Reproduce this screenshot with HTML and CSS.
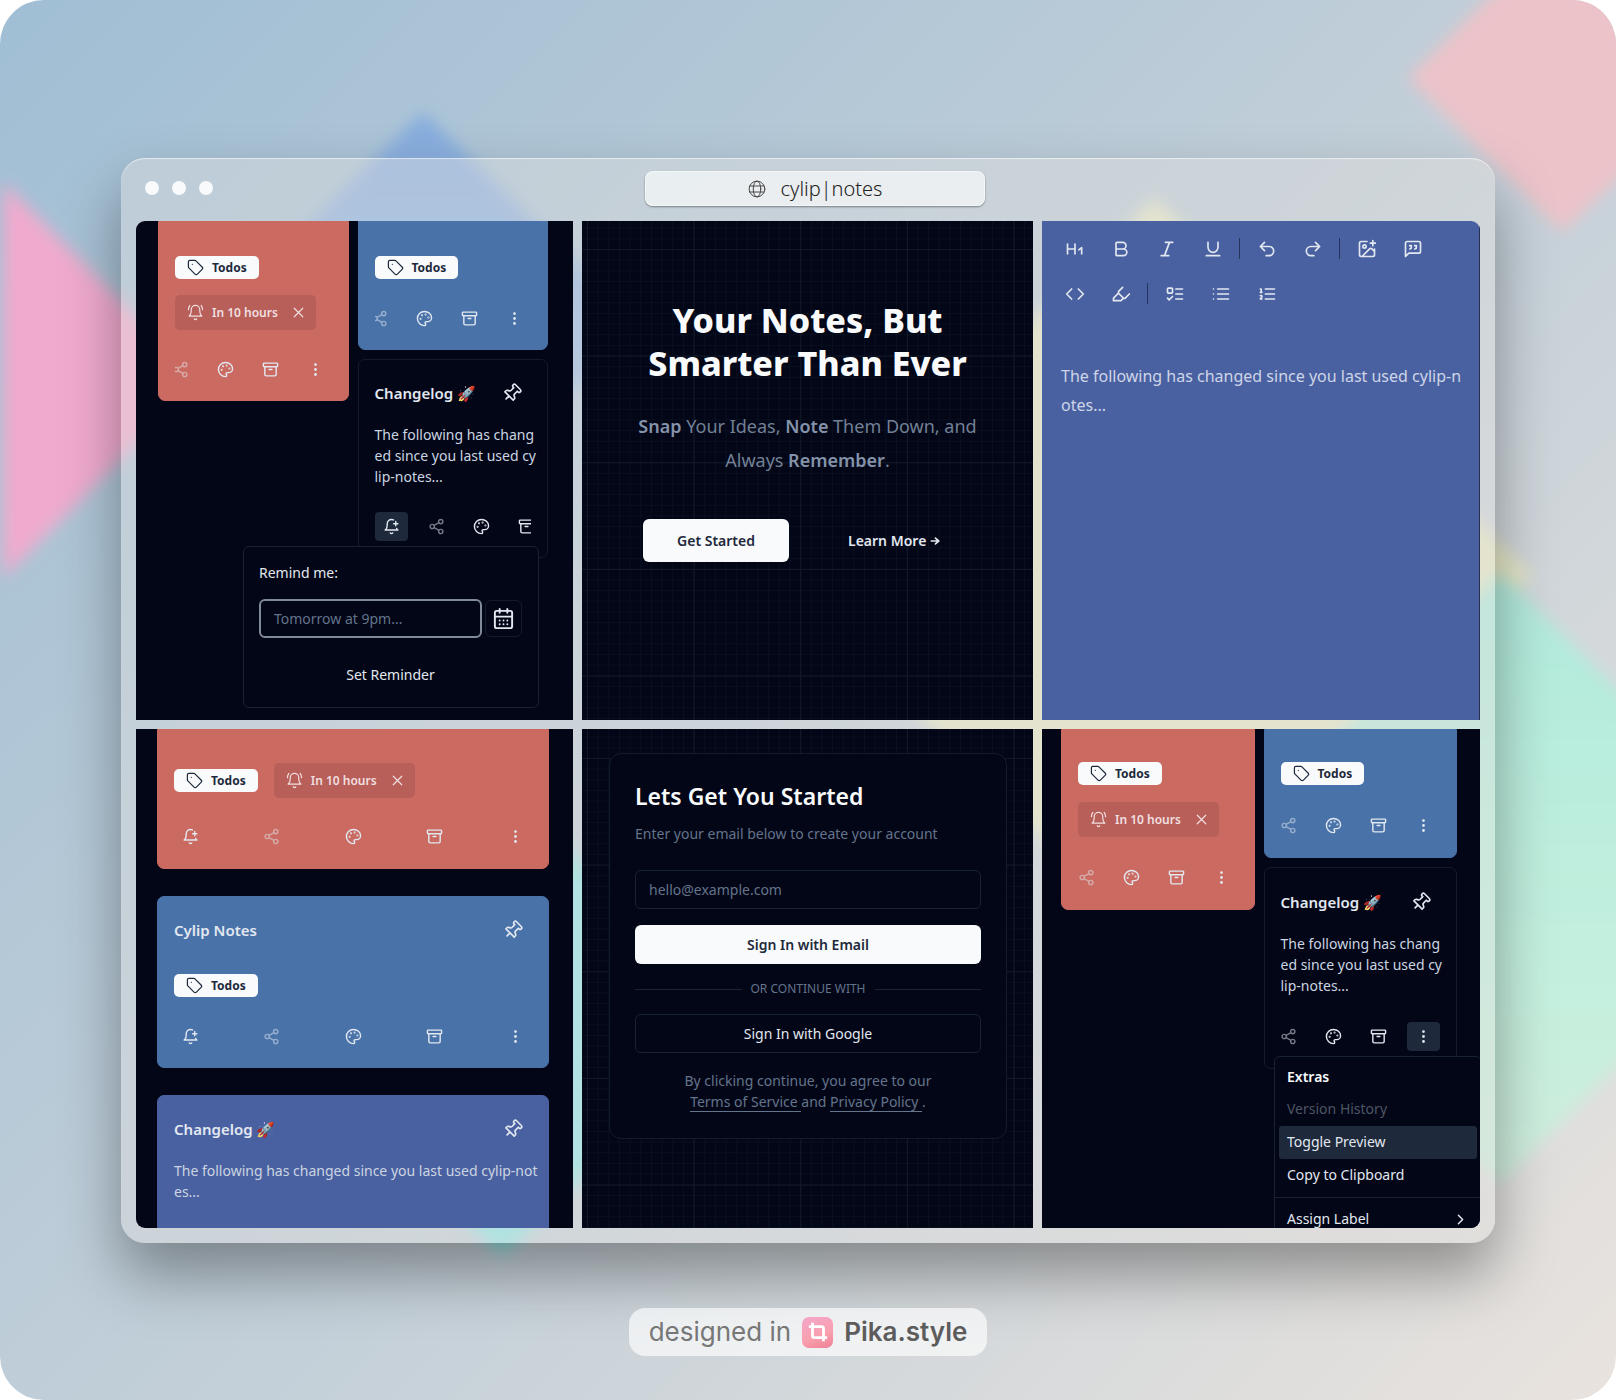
FILE: index.html
```html
<!DOCTYPE html>
<html lang="en">
<head>
<meta charset="utf-8">
<meta name="viewport" content="width=device-width, initial-scale=1">
<title>cylip|notes</title>
<link rel="stylesheet" href="styles.css">
</head>
<body>
<svg class="sprite" aria-hidden="true">
  <symbol id="share" viewBox="0 0 24 24"><circle cx="18" cy="5" r="3"/><circle cx="6" cy="12" r="3"/><circle cx="18" cy="19" r="3"/><path d="M8.6 13.5l6.8 4M15.4 6.5l-6.8 4"/></symbol>
  <symbol id="palette" viewBox="0 0 24 24"><circle cx="13.5" cy="6.5" r=".5"/><circle cx="17.5" cy="10.5" r=".5"/><circle cx="8.5" cy="7.5" r=".5"/><circle cx="6.5" cy="12.5" r=".5"/><path d="M12 2C6.5 2 2 6.5 2 12s4.5 10 10 10c.926 0 1.648-.746 1.648-1.688 0-.437-.18-.835-.437-1.125-.29-.289-.438-.652-.438-1.125a1.64 1.64 0 0 1 1.668-1.668h1.996c3.051 0 5.555-2.503 5.555-5.554C21.965 6.012 17.461 2 12 2z"/></symbol>
  <symbol id="archive" viewBox="0 0 24 24"><rect x="2" y="3" width="20" height="5" rx="1"/><path d="M4 8v11a2 2 0 0 0 2 2h12a2 2 0 0 0 2-2V8M10 12h4"/></symbol>
  <symbol id="dots" viewBox="0 0 24 24"><circle cx="12" cy="12" r="1"/><circle cx="12" cy="5" r="1"/><circle cx="12" cy="19" r="1"/></symbol>
  <symbol id="bell-plus" viewBox="0 0 24 24"><path d="M19.3 14.8C20.1 16.4 21 17 21 17H3s3-2 3-9c0-3.3 2.7-6 6-6 1 0 1.9.2 2.8.7M10.3 21a1.94 1.94 0 0 0 3.4 0M15 8h6M18 5v6"/></symbol>
  <symbol id="bell-ring" viewBox="0 0 24 24"><path d="M6 8a6 6 0 0 1 12 0c0 7 3 9 3 9H3s3-2 3-9M10.3 21a1.94 1.94 0 0 0 3.4 0M4 2C2.8 3.7 2 5.7 2 8M22 8c0-2.3-.8-4.3-2-6"/></symbol>
  <symbol id="pin" viewBox="0 0 24 24"><path transform="rotate(45 12 12)" d="M12 17v5M5 17h14v-1.76a2 2 0 0 0-1.11-1.79l-1.78-.9A2 2 0 0 1 15 10.76V6h1a2 2 0 0 0 0-4H8a2 2 0 0 0 0 4h1v4.76a2 2 0 0 1-1.11 1.79l-1.78.9A2 2 0 0 0 5 15.24Z"/></symbol>
  <symbol id="tag" viewBox="0 0 24 24"><path d="M12.586 2.586A2 2 0 0 0 11.172 2H4a2 2 0 0 0-2 2v7.172a2 2 0 0 0 .586 1.414l8.704 8.704a2.426 2.426 0 0 0 3.42 0l6.58-6.58a2.426 2.426 0 0 0 0-3.42zM7.500 7.500h.01"/></symbol>
  <symbol id="x" viewBox="0 0 24 24"><path d="M18 6 6 18M6 6l12 12"/></symbol>
  <symbol id="calendar" viewBox="0 0 24 24"><rect x="3" y="4" width="18" height="18" rx="2"/><path d="M16 2v4M8 2v4M3 10h18M8 14h.01M12 14h.01M16 14h.01M8 18h.01M12 18h.01M16 18h.01"/></symbol>
  <symbol id="h1" viewBox="0 0 24 24"><path d="M3 18V6M12 18V6M3 12h9M16.500 13l3.500-2.500V18"/></symbol>
  <symbol id="bold" viewBox="0 0 24 24"><path d="M6 12h9a4 4 0 0 1 0 8H7a1 1 0 0 1-1-1V5a1 1 0 0 1 1-1h7a4 4 0 0 1 0 8"/></symbol>
  <symbol id="italic" viewBox="0 0 24 24"><path d="M19 4h-9M14 20H5M15 4 9 20"/></symbol>
  <symbol id="underline" viewBox="0 0 24 24"><path d="M6 4v6a6 6 0 0 0 12 0V4M4 20h16"/></symbol>
  <symbol id="undo" viewBox="0 0 24 24"><path d="M9 14 4 9l5-5M4 9h10.500a5.500 5.500 0 0 1 0 11H11"/></symbol>
  <symbol id="redo" viewBox="0 0 24 24"><path d="m15 14 5-5-5-5M20 9H9.500a5.500 5.500 0 0 0 0 11H13"/></symbol>
  <symbol id="image" viewBox="0 0 24 24"><path d="M21 12v7a2 2 0 0 1-2 2H5a2 2 0 0 1-2-2V5a2 2 0 0 1 2-2h7M16 5h6M19 2v6M21 15l-3.100-3.100a2 2 0 0 0-2.800 0L6 21"/><circle cx="9" cy="9" r="2"/></symbol>
  <symbol id="quote" viewBox="0 0 24 24"><path d="M21 15a2 2 0 0 1-2 2H7l-4 4V5a2 2 0 0 1 2-2h14a2 2 0 0 1 2 2zM8 12a2 2 0 0 0 2-2V8H8M14 12a2 2 0 0 0 2-2V8h-2"/></symbol>
  <symbol id="code" viewBox="0 0 24 24"><path d="m16 18 6-6-6-6M8 6l-6 6 6 6"/></symbol>
  <symbol id="highlight" viewBox="0 0 24 24"><path d="m9 11-6 6v3h9l3-3M22 12l-4.600 4.600a2 2 0 0 1-2.800 0l-5.200-5.200a2 2 0 0 1 0-2.800L14 4"/></symbol>
  <symbol id="todo" viewBox="0 0 24 24"><rect x="3" y="5" width="6" height="6" rx="1"/><path d="m3 17 2 2 4-4M13 6h8M13 12h8M13 18h8"/></symbol>
  <symbol id="list" viewBox="0 0 24 24"><path d="M8 6h13M8 12h13M8 18h13M3 6h.01M3 12h.01M3 18h.01"/></symbol>
  <symbol id="ordered" viewBox="0 0 24 24"><path d="M10 6h11M10 12h11M10 18h11M4 6h1v4M4 10h2M6 18H4c0-1 2-2 2-3s-1-1.500-2-1"/></symbol>
  <symbol id="chevron" viewBox="0 0 24 24"><path d="m9 18 6-6-6-6"/></symbol>
  <symbol id="arrow" viewBox="0 0 24 24"><path d="M3 12h18M13 5l8 7-8 7"/></symbol>
  <symbol id="globe" viewBox="0 0 24 24"><circle cx="12" cy="12" r="10.500"/><ellipse cx="12" cy="12" rx="5" ry="10.500"/><path d="M2.500 8h19M2.500 16h19"/></symbol>
  <symbol id="crop" viewBox="0 0 24 24"><path d="M6 2v14a2 2 0 0 0 2 2h14M18 22V8a2 2 0 0 0-2-2H2"/></symbol>
</svg>

<main class="stage">
  <svg class="backdrop" viewBox="0 0 1616 1400" preserveAspectRatio="none" aria-hidden="true">
    <defs>
      <filter id="soft" x="-20%" y="-20%" width="140%" height="140%"><feGaussianBlur stdDeviation="8"/></filter>
      <linearGradient id="green" x1="0" y1="0" x2="0" y2="1"><stop offset="0" stop-color="#b0eadc"/><stop offset=".6" stop-color="#c2efde"/><stop offset="1" stop-color="#cfeedd"/></linearGradient>
      <linearGradient id="sky" x1="0" y1="0" x2="0" y2="1"><stop offset="0" stop-color="#85acde"/><stop offset="1" stop-color="#a8c2e2"/></linearGradient>
    </defs>
    <g filter="url(#soft)">
      <path fill="#f0aace" d="M3 182 200 380 3 578z"/>
      <path fill="url(#sky)" d="M423 112 640 325 423 542 206 325z"/>
      <path fill="#ecc3c9" d="M1408 78 1500-14H1640V158L1562 232z"/>
      <path fill="#e6e7c4" d="M1155 198 1532 575 1155 952 778 575z"/>
      <path fill="#8fe6e4" d="M502 785 740 1023 502 1256 264 1023z"/>
      <path fill="url(#green)" d="M1500 572 1806 878 1500 1184 1194 878z"/>
    </g>
  </svg>

  <section class="window">
    <header class="titlebar">
      <div class="lights"><i></i><i></i><i></i></div>
      <div class="address"><svg class="icon icon-globe"><use href="#globe"/></svg><span>cylip|notes</span></div>
    </header>

    <div class="tiles">
      <!-- Masonry with reminder popover -->
      <article class="tile deck deck-a">
        <div class="column">
          <div class="card red untitled">
            <div class="chips">
              <span class="badge"><svg class="icon"><use href="#tag"/></svg>Todos</span>
              <span class="due"><svg class="icon"><use href="#bell-ring"/></svg>In 10 hours<button class="bare" aria-label="Remove reminder"><svg class="icon"><use href="#x"/></svg></button></span>
            </div>
            <div class="actions">
              <button disabled aria-label="Share"><svg class="icon"><use href="#share"/></svg></button>
              <button aria-label="Colour"><svg class="icon"><use href="#palette"/></svg></button>
              <button aria-label="Archive"><svg class="icon"><use href="#archive"/></svg></button>
              <button aria-label="More"><svg class="icon"><use href="#dots"/></svg></button>
            </div>
          </div>
        </div>
        <div class="column">
          <div class="card blue">
            <h3 class="card-title">Cylip Notes</h3>
            <div class="chips"><span class="badge"><svg class="icon"><use href="#tag"/></svg>Todos</span></div>
            <div class="actions">
              <button disabled aria-label="Share"><svg class="icon"><use href="#share"/></svg></button>
              <button aria-label="Colour"><svg class="icon"><use href="#palette"/></svg></button>
              <button aria-label="Archive"><svg class="icon"><use href="#archive"/></svg></button>
              <button aria-label="More"><svg class="icon"><use href="#dots"/></svg></button>
            </div>
          </div>
          <div class="card">
            <div class="card-head"><h3 class="card-title">Changelog 🚀</h3><button class="bare" aria-label="Pin"><svg class="icon icon-pin"><use href="#pin"/></svg></button></div>
            <p class="card-text">The following has chang<br>ed since you last used cy<br>lip-notes...</p>
            <div class="actions from-start">
              <button class="active" aria-label="Remind"><svg class="icon"><use href="#bell-plus"/></svg></button>
              <button disabled aria-label="Share"><svg class="icon"><use href="#share"/></svg></button>
              <button aria-label="Colour"><svg class="icon"><use href="#palette"/></svg></button>
              <button aria-label="Archive"><svg class="icon"><use href="#archive"/></svg></button>
            </div>
          </div>
        </div>
        <form class="reminder">
          <label for="when">Remind me:</label>
          <div class="reminder-row">
            <input id="when" class="field focused" type="text" placeholder="Tomorrow at 9pm...">
            <button type="button" class="calendar" aria-label="Pick a date"><svg class="icon"><use href="#calendar"/></svg></button>
          </div>
          <button type="button" class="ghost">Set Reminder</button>
        </form>
      </article>

      <!-- Landing hero -->
      <article class="tile ruled hero">
        <h1>Your Notes, But<br>Smarter Than Ever</h1>
        <p><strong>Snap</strong> Your Ideas, <strong>Note</strong> Them Down, and<br>Always <strong>Remember</strong>.</p>
        <div class="hero-actions">
          <button class="solid">Get Started</button>
          <a href="#more">Learn More <svg class="icon icon-arrow" aria-hidden="true"><use href="#arrow"/></svg></a>
        </div>
      </article>

      <!-- Editor -->
      <article class="tile editor">
        <div class="toolbar">
          <button aria-label="Heading"><svg class="icon"><use href="#h1"/></svg></button>
          <button aria-label="Bold"><svg class="icon"><use href="#bold"/></svg></button>
          <button aria-label="Italic"><svg class="icon"><use href="#italic"/></svg></button>
          <button aria-label="Underline"><svg class="icon"><use href="#underline"/></svg></button>
          <i class="rule"></i>
          <button aria-label="Undo"><svg class="icon"><use href="#undo"/></svg></button>
          <button aria-label="Redo"><svg class="icon"><use href="#redo"/></svg></button>
          <i class="rule"></i>
          <button aria-label="Image"><svg class="icon"><use href="#image"/></svg></button>
          <button aria-label="Quote"><svg class="icon"><use href="#quote"/></svg></button>
          <button aria-label="Code"><svg class="icon"><use href="#code"/></svg></button>
          <button aria-label="Highlight"><svg class="icon"><use href="#highlight"/></svg></button>
          <i class="rule"></i>
          <button aria-label="Task list"><svg class="icon"><use href="#todo"/></svg></button>
          <button aria-label="Bullet list"><svg class="icon"><use href="#list"/></svg></button>
          <button aria-label="Numbered list"><svg class="icon"><use href="#ordered"/></svg></button>
        </div>
        <p>The following has changed since you last used cylip-n<br>otes...</p>
      </article>

      <!-- Single column list -->
      <article class="tile feed">
        <div class="card red untitled">
          <div class="chips">
            <span class="badge"><svg class="icon"><use href="#tag"/></svg>Todos</span>
            <span class="due"><svg class="icon"><use href="#bell-ring"/></svg>In 10 hours<button class="bare" aria-label="Remove reminder"><svg class="icon"><use href="#x"/></svg></button></span>
          </div>
          <div class="actions">
            <button aria-label="Remind"><svg class="icon"><use href="#bell-plus"/></svg></button>
            <button disabled aria-label="Share"><svg class="icon"><use href="#share"/></svg></button>
            <button aria-label="Colour"><svg class="icon"><use href="#palette"/></svg></button>
            <button aria-label="Archive"><svg class="icon"><use href="#archive"/></svg></button>
            <button aria-label="More"><svg class="icon"><use href="#dots"/></svg></button>
          </div>
        </div>
        <div class="card blue">
          <div class="card-head"><h3 class="card-title">Cylip Notes</h3><button class="bare" aria-label="Pin"><svg class="icon icon-pin"><use href="#pin"/></svg></button></div>
          <div class="chips"><span class="badge"><svg class="icon"><use href="#tag"/></svg>Todos</span></div>
          <div class="actions">
            <button aria-label="Remind"><svg class="icon"><use href="#bell-plus"/></svg></button>
            <button disabled aria-label="Share"><svg class="icon"><use href="#share"/></svg></button>
            <button aria-label="Colour"><svg class="icon"><use href="#palette"/></svg></button>
            <button aria-label="Archive"><svg class="icon"><use href="#archive"/></svg></button>
            <button aria-label="More"><svg class="icon"><use href="#dots"/></svg></button>
          </div>
        </div>
        <div class="card indigo">
          <div class="card-head"><h3 class="card-title">Changelog 🚀</h3><button class="bare" aria-label="Pin"><svg class="icon icon-pin"><use href="#pin"/></svg></button></div>
          <p class="card-text">The following has changed since you last used cylip-not<br>es...</p>
        </div>
      </article>

      <!-- Sign in -->
      <article class="tile ruled signin">
        <form class="panel">
          <h2>Lets Get You Started</h2>
          <label for="email">Enter your email below to create your account</label>
          <input id="email" class="field" type="email" placeholder="hello@example.com">
          <button type="button" class="solid">Sign In with Email</button>
          <div class="divider">OR CONTINUE WITH</div>
          <button type="button" class="outline">Sign In with Google</button>
          <p>By clicking continue, you agree to our<br><a href="#terms">Terms of Service&nbsp;</a>and <a href="#privacy">Privacy Policy&nbsp;</a>.</p>
        </form>
      </article>

      <!-- Masonry with extras menu -->
      <article class="tile deck deck-b">
        <div class="column">
          <div class="card red untitled">
            <div class="chips">
              <span class="badge"><svg class="icon"><use href="#tag"/></svg>Todos</span>
              <span class="due"><svg class="icon"><use href="#bell-ring"/></svg>In 10 hours<button class="bare" aria-label="Remove reminder"><svg class="icon"><use href="#x"/></svg></button></span>
            </div>
            <div class="actions">
              <button disabled aria-label="Share"><svg class="icon"><use href="#share"/></svg></button>
              <button aria-label="Colour"><svg class="icon"><use href="#palette"/></svg></button>
              <button aria-label="Archive"><svg class="icon"><use href="#archive"/></svg></button>
              <button aria-label="More"><svg class="icon"><use href="#dots"/></svg></button>
            </div>
          </div>
        </div>
        <div class="column">
          <div class="card blue untitled">
            <div class="chips"><span class="badge"><svg class="icon"><use href="#tag"/></svg>Todos</span></div>
            <div class="actions">
              <button disabled aria-label="Share"><svg class="icon"><use href="#share"/></svg></button>
              <button aria-label="Colour"><svg class="icon"><use href="#palette"/></svg></button>
              <button aria-label="Archive"><svg class="icon"><use href="#archive"/></svg></button>
              <button aria-label="More"><svg class="icon"><use href="#dots"/></svg></button>
            </div>
          </div>
          <div class="card">
            <div class="card-head"><h3 class="card-title">Changelog 🚀</h3><button class="bare" aria-label="Pin"><svg class="icon icon-pin"><use href="#pin"/></svg></button></div>
            <p class="card-text">The following has chang<br>ed since you last used cy<br>lip-notes...</p>
            <div class="actions">
              <button disabled aria-label="Share"><svg class="icon"><use href="#share"/></svg></button>
              <button aria-label="Colour"><svg class="icon"><use href="#palette"/></svg></button>
              <button aria-label="Archive"><svg class="icon"><use href="#archive"/></svg></button>
              <button class="active" aria-label="More"><svg class="icon"><use href="#dots"/></svg></button>
            </div>
          </div>
        </div>
        <div class="menu">
          <h4>Extras</h4>
          <button disabled>Version History</button>
          <button class="active">Toggle Preview</button>
          <button>Copy to Clipboard</button>
          <hr>
          <button>Assign Label<svg class="icon"><use href="#chevron"/></svg></button>
        </div>
      </article>
    </div>
  </section>

  <footer class="credit">designed in <span class="logo"><svg class="icon"><use href="#crop"/></svg></span> <strong>Pika.style</strong></footer>
</main>
</body>
</html>
```

FILE: styles.css
```css
* { box-sizing: border-box; }

body {
  margin: 0;
  background: #fff;
  font-family: "Noto Sans", "Open Sans", sans-serif;
  font-size: 14px;
  line-height: 20px;
  color: #e2e8f0;
}

h1, h2, h3, h4, p { margin: 0; }

button {
  display: flex;
  align-items: center;
  justify-content: center;
  padding: 0;
  border: 0;
  background: none;
  color: inherit;
  font: inherit;
}

.sprite { position: absolute; width: 0; height: 0; }

.icon {
  flex: none;
  width: 17px;
  height: 17px;
  fill: none;
  stroke: currentColor;
  stroke-width: 2;
  stroke-linecap: round;
  stroke-linejoin: round;
}

/* Stage */
.stage {
  position: relative;
  display: flex;
  flex-direction: column;
  align-items: center;
  min-height: 100vh;
  padding: 158px 121px 44px;
  border-radius: 44px;
  overflow: hidden;
  background: linear-gradient(135deg, #a0bed4 0%, #c6d1d9 58%, #e9e3de 100%);
}

.backdrop { position: absolute; inset: 0; width: 100%; height: 100%; }

/* Browser window */
.window {
  position: relative;
  align-self: stretch;
  padding: 0 15px 15px;
  border-radius: 24px;
  background: rgba(226, 222, 220, .4);
  box-shadow: inset 0 1px 1px rgba(255, 255, 255, .6), 0 32px 60px rgba(0, 0, 0, .36);
}

.titlebar {
  display: grid;
  grid-template-columns: 1fr 340px 1fr;
  align-items: center;
  height: 63px;
}

.lights { display: flex; gap: 13px; padding: 0 0 3px 9px; }
.lights i { width: 14px; height: 14px; border-radius: 50%; background: #f8fafc; }

.address {
  display: flex;
  align-items: center;
  justify-content: center;
  gap: 15px;
  height: 35px;
  margin: 0 -7px 2px 7px;
  border-radius: 8px;
  background: rgba(244, 246, 246, .78);
  box-shadow: inset 0 0 0 1px rgba(255, 255, 255, .5), 0 1px 2px rgba(0, 0, 0, .4);
  color: #222;
  font-size: 20px;
  font-weight: 300;
}
.icon-globe { width: 18px; height: 18px; stroke-width: 1.3px; color: #444; }

.tiles {
  display: grid;
  grid-template-columns: 437fr 451fr 438fr;
  grid-template-rows: minmax(499px, auto) minmax(498px, auto);
  gap: 9px;
  border-radius: 9px;
  overflow: hidden;
}

.tile { position: relative; min-width: 0; overflow: hidden; background: #020617; }

/* Note cards */
.card {
  padding: 15px 16px 16px;
  border: 1px solid #131c2e;
  border-radius: 7px;
}
.red { background: #cb6a61; border-color: #cb6a61; }
.blue { background: #4972a9; border-color: #4972a9; }
.indigo { background: #4a61a1; border-color: #4a61a1; }

.card-head { display: flex; justify-content: space-between; padding-right: 9px; }
.card-title { font-size: 15px; font-weight: 600; line-height: 36px; white-space: nowrap; }
.icon-pin { width: 20px; height: 20px; }
.card-text { padding-top: 13px; line-height: 21px; color: #cbd5e1; white-space: nowrap; }

.chips { display: flex; flex-wrap: wrap; align-items: center; gap: 16px; }
.badge, .due {
  display: flex;
  align-items: center;
  gap: 8px;
  padding: 0 12px;
  border-radius: 5px;
  font-size: 12px;
  font-weight: 600;
  white-space: nowrap;
}
.badge { height: 23px; background: #f8fafc; color: #1e293b; font-weight: 700; }
.due { height: 35px; padding-right: 9px; background: #b75f58; color: #f1dfe1; }
.due .bare { margin-left: 4px; }
.chips .icon { stroke-width: 1.7px; }

.actions { display: flex; justify-content: flex-end; gap: 12px; overflow: hidden; }
.actions.from-start { justify-content: flex-start; }
.actions button { flex: none; width: 33px; height: 29px; border-radius: 4px; }
.actions button:disabled { color: inherit; opacity: .5; }
.actions .active { background: #1e293b; }

.card .chips + .actions, .card .card-text + .actions { margin-top: 25px; }
.blue .card-title + .chips, .card-head + .chips { margin-top: 26px; }

/* Two-column decks */
.deck {
  display: grid;
  grid-template-columns: 1fr 1fr;
  align-content: start;
  gap: 9px;
}
.deck-a { padding: 0 25px 0 22px; }
.deck-b { padding: 0 23px 0 19px; }
.column { display: flex; flex-direction: column; gap: 9px; min-width: 0; }
.deck-a .column:nth-child(2) { margin-top: -43px; }
.deck .untitled { border-radius: 0 0 7px 7px; }
.deck-a .untitled { padding-top: 34px; }
.deck-b .card { padding-bottom: 17px; }
.deck-b .untitled { padding-top: 32px; }
.deck-b .card:last-child:not(.red) { padding-top: 16px; }
.deck-b .chips { gap: 17px; }
.deck-b .card .actions { margin-top: 26px; }

/* Reminder popover */
.reminder {
  position: absolute;
  top: 325px;
  right: 34px;
  width: 296px;
  padding: 16px 16px 14px 15px;
  border: 1px solid #182235;
  border-radius: 6px;
  background: #020617;
}
.reminder-row { display: flex; align-items: center; gap: 3px; margin: 16px 0 19px; }
.reminder .field { flex: 1; }
.calendar { width: 37px; height: 37px; border: 1px solid #131c2e; border-radius: 6px; }
.calendar .icon { width: 23px; height: 23px; }
.ghost { width: 100%; height: 36px; }

.field {
  display: block;
  width: 100%;
  min-width: 0;
  height: 39px;
  padding: 0 13px;
  border: 1px solid #182235;
  border-radius: 6px;
  background: #020617;
  color: #e2e8f0;
  font: inherit;
}
.field::placeholder { color: #64748b; opacity: 1; }
.field.focused { border: 2px solid #7f8a9b; }

/* Ruled background: ten fine cells to a coarse one */
.ruled {
  --fine: calc(32px / 3);
  --coarse: calc(320px / 3);
  background-color: #020617;
  background-image:
    linear-gradient(#111828 1px, transparent 1px),
    linear-gradient(90deg, #111828 1px, transparent 1px),
    linear-gradient(#080f1f 1px, transparent 1px),
    linear-gradient(90deg, #080f1f 1px, transparent 1px);
  background-size: var(--coarse) var(--coarse), var(--coarse) var(--coarse), var(--fine) var(--fine), var(--fine) var(--fine);
  background-position: 5px 28px;
}

.hero { padding-top: 78px; text-align: center; }
.hero h1 { font-size: 34px; font-weight: 800; line-height: 43px; color: #f8fafc; white-space: nowrap; }
.hero p { margin-top: 24px; font-size: 18px; line-height: 34px; color: #728096; white-space: nowrap; }
.hero strong { font-weight: 600; color: #8493aa; }
.hero-actions { display: flex; justify-content: center; align-items: center; gap: 27px; margin-top: 42px; font-weight: 600; }
.hero-actions a { padding: 0 32px; color: #e2e8f0; text-decoration: none; }
.icon-arrow { width: 10px; height: 10px; stroke-width: 4; }
.solid { border-radius: 6px; background: #f8fafc; color: #1e293b; font-weight: 600; }
.hero .solid { width: 146px; height: 43px; }

/* Editor */
.editor { padding: 5px 10px; background: #4a61a1; border-right: 1px solid #27304f; }
.toolbar { display: flex; flex-wrap: wrap; align-items: center; }
.toolbar button { width: 46px; height: 45px; }
.toolbar .icon { width: 20px; height: 20px; }
.rule { width: 1px; height: 21px; margin: 0 4px 0 3px; background: #26335c; }
.editor p { padding: 46px 9px; font-size: 16px; line-height: 29px; color: #ced5e8; white-space: nowrap; }

/* Feed */
.feed { display: flex; flex-direction: column; gap: 27px; padding: 0 24px 0 21px; }
.feed .untitled { padding-top: 33px; border-radius: 0 0 7px 7px; }
.feed .untitled .actions { margin-top: 24px; margin-bottom: 1px; }
.feed .actions { justify-content: space-between; }
.feed .indigo { flex: 1; border-radius: 7px 7px 0 0; }

/* Sign in */
.signin { padding: 24px 26px 89px 27px; background-position: 5px 29px; }
.panel { padding: 26px 25px 26px; border: 1px solid #131c2e; border-radius: 12px; background: #020617; }
.panel h2 { font-size: 23px; font-weight: 600; line-height: 32px; color: #f8fafc; }
.panel label { display: block; margin: 12px 0 26px; color: #64748b; white-space: nowrap; }
.panel .field { margin-bottom: 16px; }
.panel button { width: 100%; height: 39px; }
.divider { display: flex; align-items: center; gap: 9px; margin: 15px 0; font-size: 12px; color: #64748b; white-space: nowrap; }
.divider::before, .divider::after { content: ""; flex: 1; height: 1px; background: #1a2436; }
.outline { border: 1px solid #182235; border-radius: 6px; }
.panel p { margin-top: 17px; line-height: 21px; text-align: center; color: #64748b; }
.panel a { color: inherit; text-decoration: none; border-bottom: 1px solid #64748b; }

/* Extras menu */
.menu {
  position: absolute;
  top: 327px;
  right: -2px;
  width: 208px;
  padding: 4px;
  border: 1px solid #182235;
  border-radius: 6px;
  background: #020617;
}
.menu h4 { padding: 0 8px; font-weight: 600; line-height: 32px; color: #f8fafc; }
.menu button { width: 100%; height: 33px; padding: 0 8px 1px; justify-content: space-between; border-radius: 3px; }
.menu button:disabled { color: #4d5564; }
.menu .active { background: #1e293b; }
.menu hr { height: 1px; margin: 5px -4px; border: 0; background: #182235; }

/* Credit */
.credit {
  position: relative;
  display: flex;
  align-items: center;
  gap: 11px;
  height: 48px;
  margin-top: 65px;
  padding: 0 20px;
  border-radius: 16px;
  background: rgba(255, 255, 255, .65);
  color: #777;
  font-family: Inter, sans-serif;
  font-size: 26px;
}
.credit strong { font-weight: 600; color: #5c5c5c; }
.logo {
  display: flex;
  align-items: center;
  justify-content: center;
  width: 31px;
  height: 31px;
  border-radius: 7px;
  background: linear-gradient(160deg, #f4a6cb, #f9a0ae 60%, #ee7f95);
  color: #fff;
}
.logo .icon { width: 22px; height: 22px; stroke-width: 3; stroke-linecap: butt; }
```
